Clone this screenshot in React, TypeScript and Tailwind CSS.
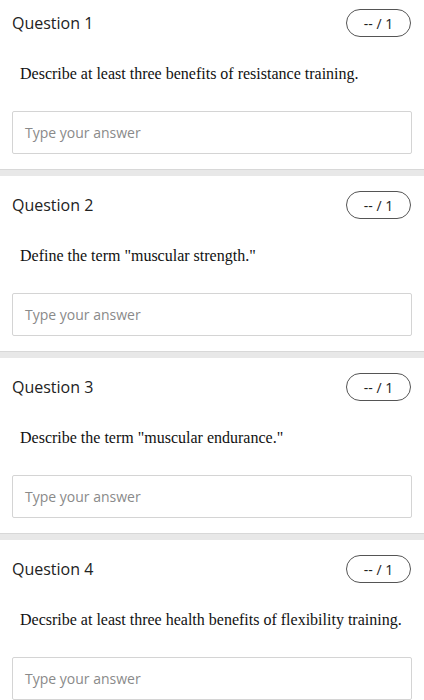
const QUESTIONS = [
  "Describe at least three benefits of resistance training.",
  'Define the term "muscular strength."',
  'Describe the term "muscular endurance."',
  "Decsribe at least three health benefits of flexibility training.",
];

function QuestionBlock({ n, text, first }: { n: number; text: string; first: boolean }) {
  return (
    <section className={first ? "pt-[9px]" : "pt-[15px]"}>
      <div className="flex h-[28px] items-center justify-between pl-[12px] pr-[13px]">
        <h2 className="text-[16px] leading-none text-[#222]">Question {n}</h2>
        <span className="flex h-[28px] w-[65px] items-center justify-center rounded-full border border-[#555] text-[14px] text-[#222]">
          -- / 1
        </span>
      </div>
      <p className="mt-[27px] pl-[20px] font-['Liberation_Serif',serif] text-[16px] leading-[20px] text-[#111]">
        {text}
      </p>
      <div className="mx-[12px] mt-[27px] flex h-[43px] items-center rounded-[2px] border border-[#d4d4d4] px-[12px] text-[14px] text-[#8a8a8a]">
        Type your answer
      </div>
      <div className="mt-[15px] h-[7px] border-t border-[#d8d8d8] bg-[#e8e8e8]" />
    </section>
  );
}

export default function App() {
  return (
    <div className="h-[700px] overflow-hidden bg-white font-['Open_Sans',sans-serif]">
      {QUESTIONS.map((q, i) => (
        <QuestionBlock key={i} n={i + 1} text={q} first={i === 0} />
      ))}
    </div>
  );
}
